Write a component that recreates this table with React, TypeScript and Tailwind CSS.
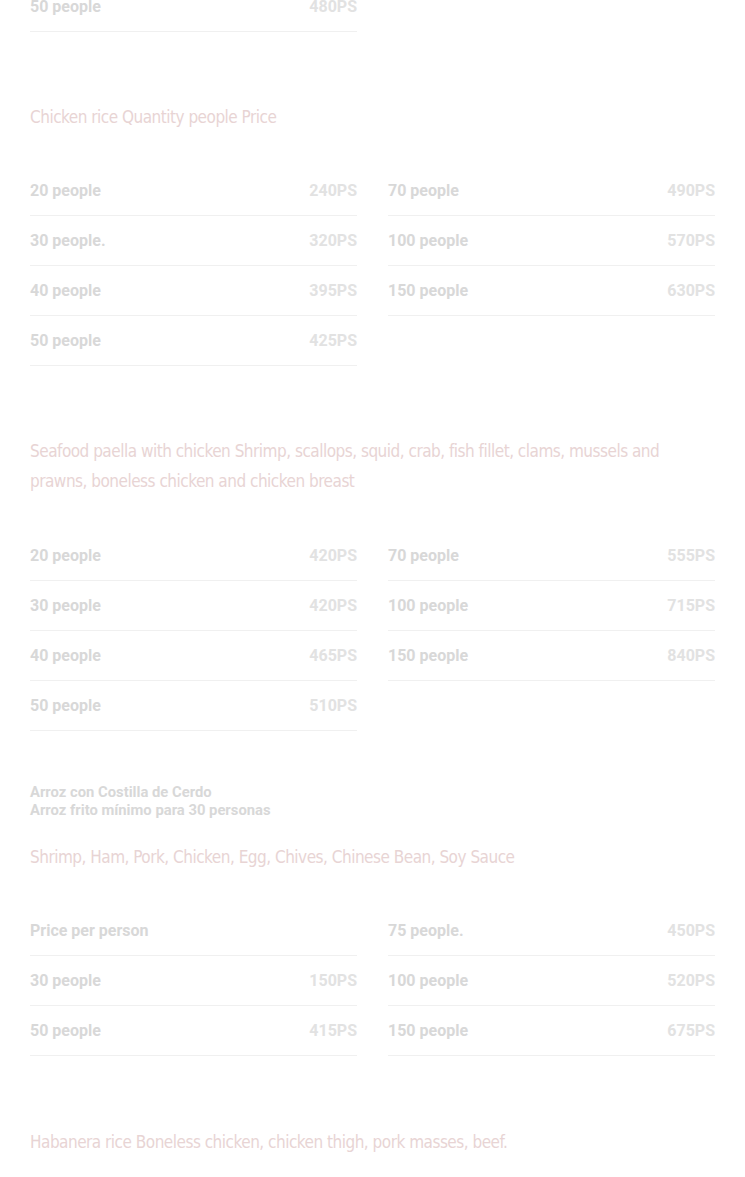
const sections = [
  {
    title: 'Chicken rice Quantity people Price',
    left: [
      ['20 people', '240PS'],
      ['30 people.', '320PS'],
      ['40 people', '395PS'],
      ['50 people', '425PS'],
    ],
    right: [
      ['70 people', '490PS'],
      ['100 people', '570PS'],
      ['150 people', '630PS'],
    ],
  },
  {
    title:
      'Seafood paella with chicken Shrimp, scallops, squid, crab, fish fillet, clams, mussels and prawns, boneless chicken and chicken breast',
    left: [
      ['20 people', '420PS'],
      ['30 people', '420PS'],
      ['40 people', '465PS'],
      ['50 people', '510PS'],
    ],
    right: [
      ['70 people', '555PS'],
      ['100 people', '715PS'],
      ['150 people', '840PS'],
    ],
  },
  {
    note: ['Arroz con Costilla de Cerdo', 'Arroz frito mínimo para 30 personas'],
    title: 'Shrimp, Ham, Pork, Chicken, Egg, Chives, Chinese Bean, Soy Sauce',
    left: [
      ['Price per person', ''],
      ['30 people', '150PS'],
      ['50 people', '415PS'],
    ],
    right: [
      ['75 people.', '450PS'],
      ['100 people', '520PS'],
      ['150 people', '675PS'],
    ],
  },
] as const;

// no Oswald here, condensed DejaVu is the nearest narrow face
const headingFont = {
  fontFamily: '"DejaVu Sans", sans-serif',
  fontStretch: 'condensed',
};

function Row({ label, price }: { label: string; price: string }) {
  return (
    <li className="flex h-[50px] items-center justify-between border-b border-[#f0f0f0]">
      <span className="font-bold text-[#d8d8d8]">{label}</span>
      <span className="font-bold text-[#e2e2e2]">{price}</span>
    </li>
  );
}

function Heading({ children }: { children: string }) {
  return (
    <h2
      className="text-[17px] leading-[30px] tracking-[-0.5px] text-[#e8d4d4]"
      style={headingFont}
    >
      {children}
    </h2>
  );
}

export default function App() {
  return (
    <div className="bg-white px-[30px] font-['Roboto',sans-serif] text-[16px]" style={{ marginTop: -18 }}>
      {/* tail of the previous list */}
      <ul className="w-[327px]">
        <Row label="50 people" price="480PS" />
      </ul>

      {sections.map((s, i) => (
        <section key={s.title} className={'note' in s ? 'pt-[52px]' : 'pt-[70px]'}>
          {'note' in s && (
            <div className="mb-[23px] text-[14.8px] leading-[18px] font-bold text-[#d8d8d8]">
              {s.note.map((n) => (
                <p key={n}>{n}</p>
              ))}
            </div>
          )}
          <Heading>{s.title}</Heading>
          <div className={`grid grid-cols-2 gap-x-[31px] ${i === 1 ? 'mt-[35px]' : 'mt-[34px]'}`}>
            <ul>
              {s.left.map(([l, p]) => (
                <Row key={l} label={l} price={p} />
              ))}
            </ul>
            <ul>
              {s.right.map(([l, p]) => (
                <Row key={l} label={l} price={p} />
              ))}
            </ul>
          </div>
        </section>
      ))}

      <section className="pt-[71px] pb-10">
        <Heading>Habanera rice Boneless chicken, chicken thigh, pork masses, beef.</Heading>
      </section>
    </div>
  );
}
